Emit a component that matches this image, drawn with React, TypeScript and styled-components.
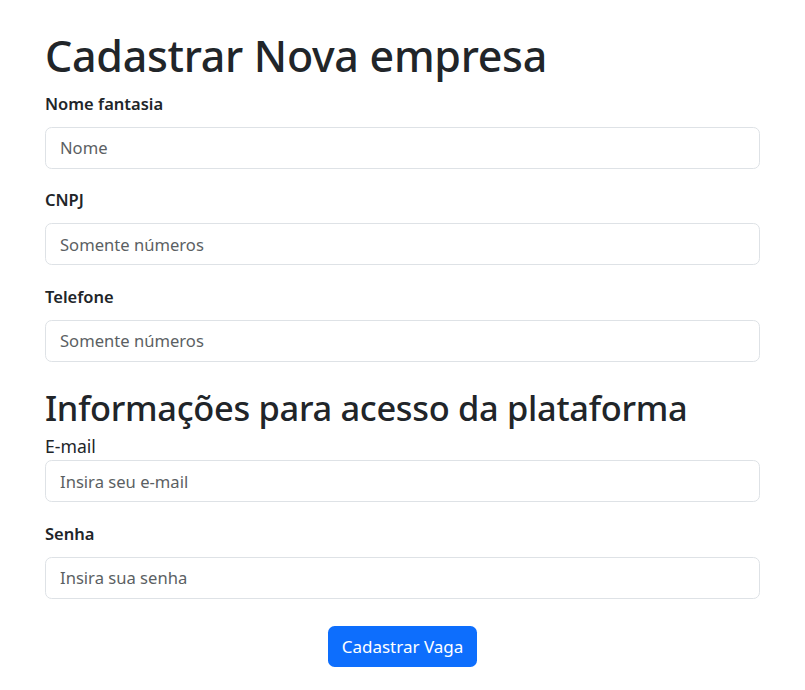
import React from "react";
import styled, { createGlobalStyle } from "styled-components";

const Global = createGlobalStyle`
  html, body { margin: 0; padding: 0; background: #fff; }
  body {
    font-family: "Noto Sans", "Open Sans", sans-serif;
    color: #212529;
  }
  * { box-sizing: border-box; }
`;

const Page = styled.main`
  width: 715px;
  margin: 0 0 0 45px;
  padding-top: 30px;
  display: flex;
  flex-direction: column;
`;

const Title = styled.h1<{ $size: number; $mb: number; $mt?: number }>`
  margin: ${(p) => p.$mt ?? 0}px 0 ${(p) => p.$mb}px 0;
  font-size: ${(p) => p.$size}px;
  line-height: 1.2;
  font-weight: 500;
  letter-spacing: -0.3px;
`;

const Field = styled.div`
  display: flex;
  flex-direction: column;
  margin-bottom: 18.5px;
`;

const Label = styled.label<{ $plain?: boolean }>`
  font-size: ${(p) => (p.$plain ? "17.6px" : "16.5px")};
  line-height: 26px;
  font-weight: ${(p) => (p.$plain ? 400 : 600)};
  margin-bottom: ${(p) => (p.$plain ? 1 : 10)}px;
`;

const Input = styled.input`
  height: 42px;
  width: 100%;
  padding: 0 14px;
  border: 1px solid #dee2e6;
  border-radius: 6.6px;
  font-family: inherit;
  font-size: 16.6px;
  color: #212529;
  background: #fff;
  outline: none;
  &::placeholder { color: #5b5f63; opacity: 1; }
`;

const Actions = styled.div`
  display: flex;
  justify-content: center;
  padding-top: 9px;
`;

const Button = styled.button`
  height: 41px;
  width: 149px;
  border: none;
  border-radius: 6.6px;
  background: #0d6efd;
  color: #fff;
  font-family: inherit;
  font-size: 17px;
  cursor: pointer;
`;

export default function App() {
  return (
    <>
      <Global />
      <Page>
        <Title $size={43} $mb={9}>Cadastrar Nova empresa</Title>
        <Field>
          <Label>Nome fantasia</Label>
          <Input placeholder="Nome" />
        </Field>
        <Field>
          <Label>CNPJ</Label>
          <Input placeholder="Somente números" />
        </Field>
        <Field>
          <Label>Telefone</Label>
          <Input placeholder="Somente números" />
        </Field>
        <Title $size={34.4} $mb={5} $mt={7}>Informações para acesso da plataforma</Title>
        <Field>
          <Label $plain>E-mail</Label>
          <Input placeholder="Insira seu e-mail" type="email" />
        </Field>
        <Field>
          <Label>Senha</Label>
          <Input placeholder="Insira sua senha" type="password" />
        </Field>
        <Actions>
          <Button type="button">Cadastrar Vaga</Button>
        </Actions>
      </Page>
    </>
  );
}
